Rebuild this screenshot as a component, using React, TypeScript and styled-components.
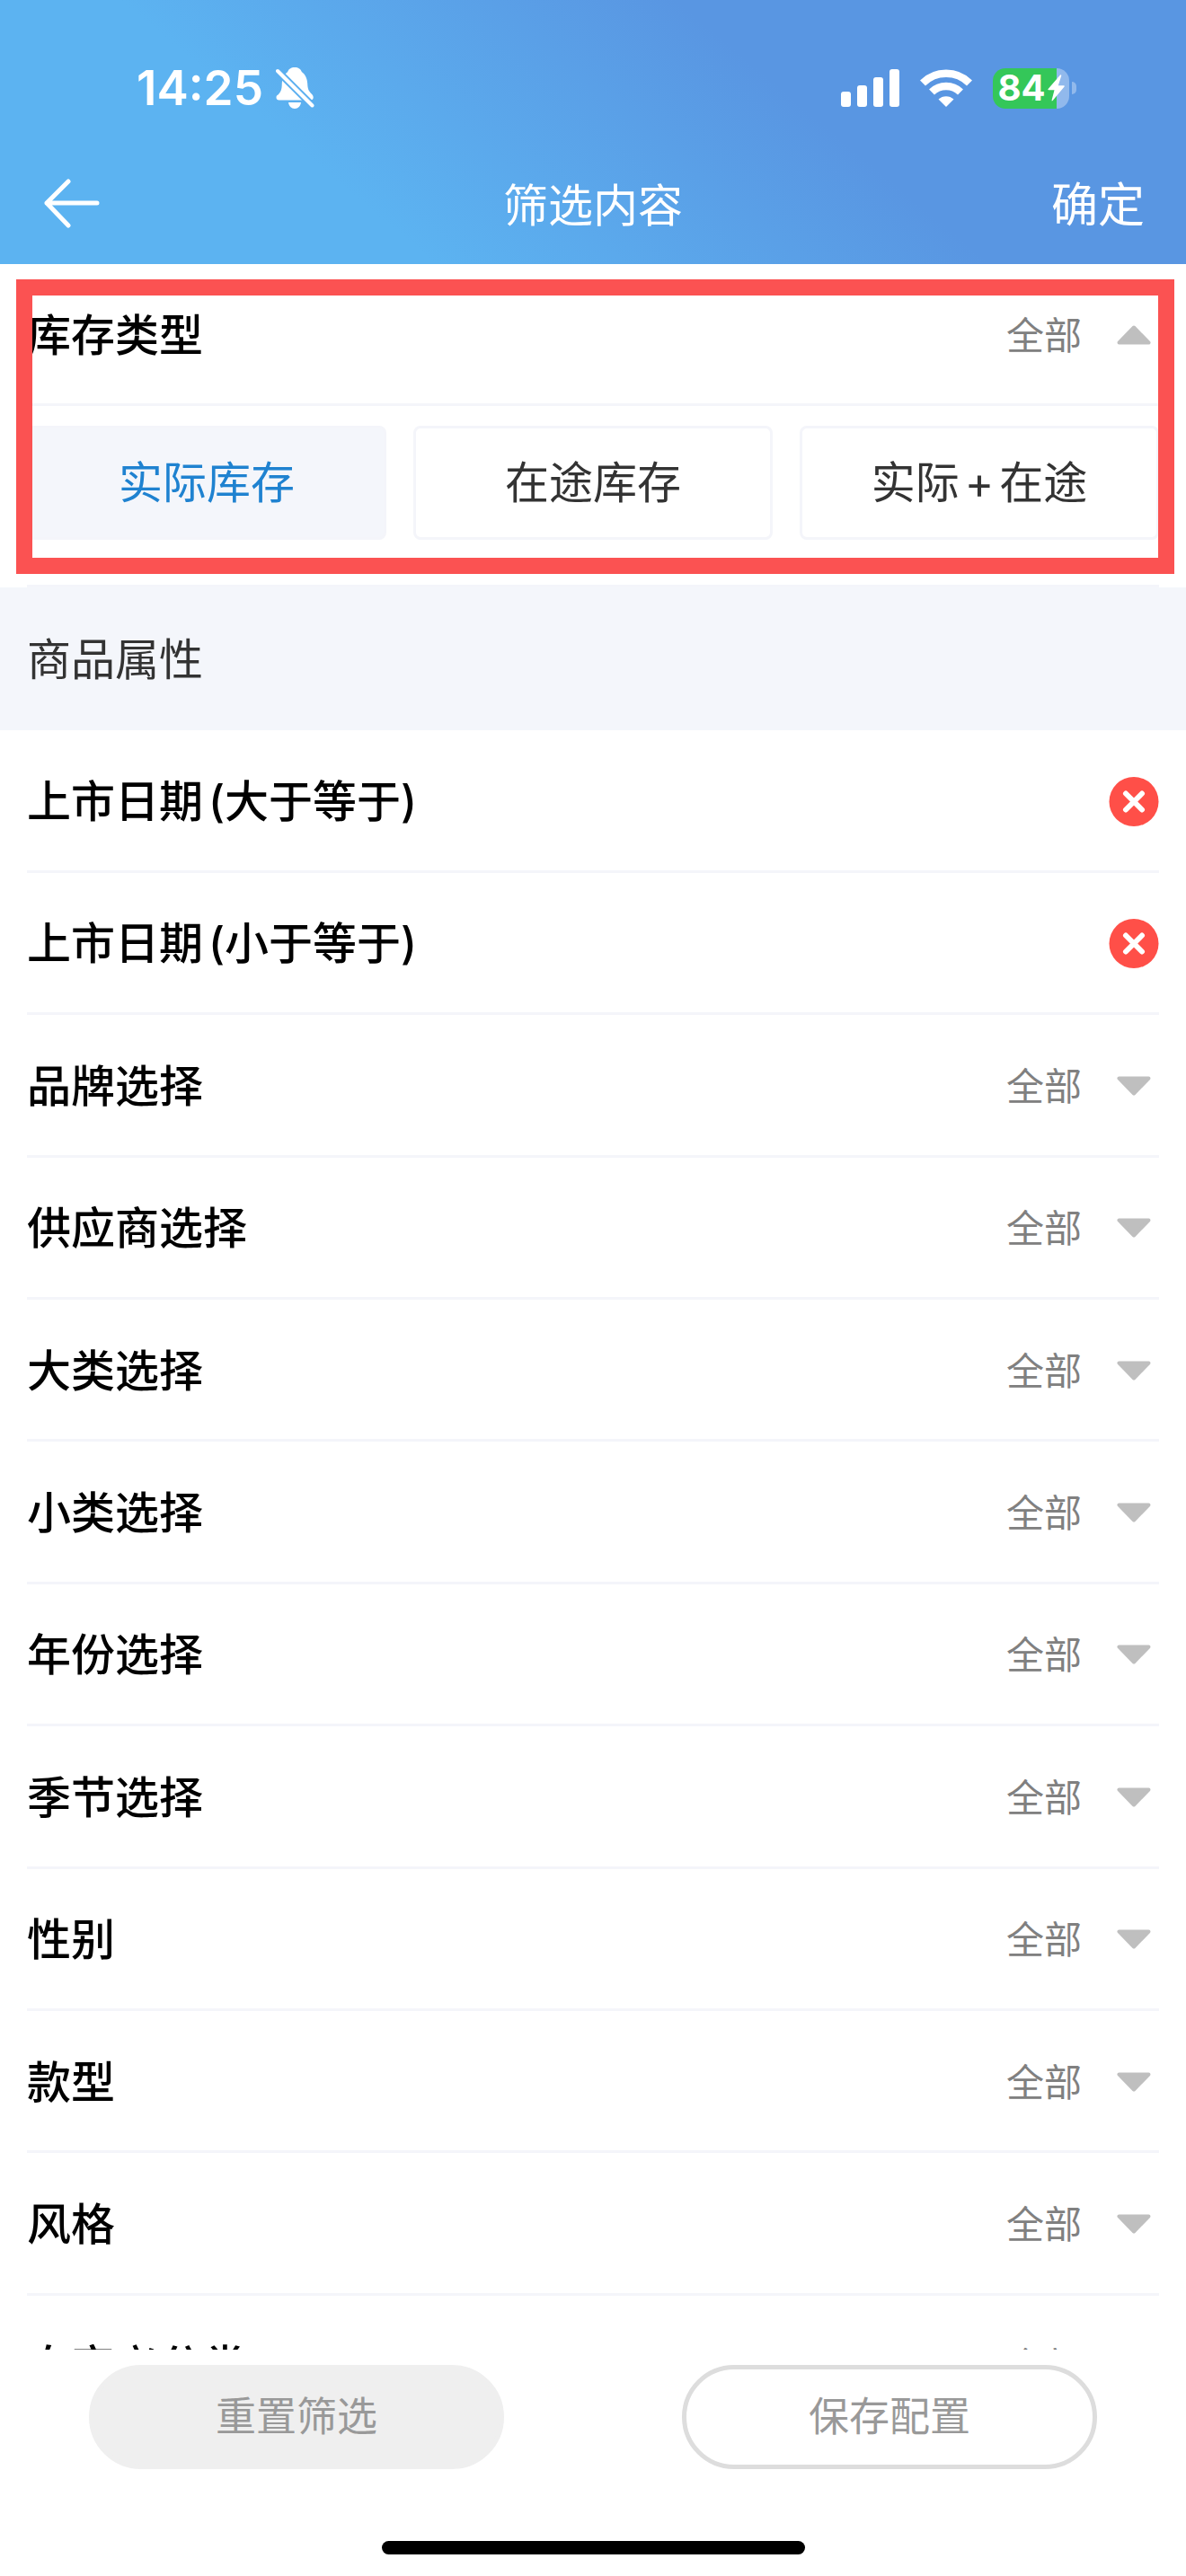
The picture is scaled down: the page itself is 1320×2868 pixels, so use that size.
import React, { useState } from "react";
import styled, { createGlobalStyle, css } from "styled-components";

const GlobalStyle = createGlobalStyle`
  * { box-sizing: border-box; }
  body {
    margin: 0;
    background: #ffffff;
    font-family: Inter, "Noto Sans CJK SC", sans-serif;
  }
  button {
    margin: 0;
    padding: 0;
    border: 0;
    background: none;
    font: inherit;
    color: inherit;
    cursor: pointer;
  }
  svg { display: block; }
`;

const Page = styled.div`
  display: flex;
  flex-direction: column;
  height: 100vh;
  background: #ffffff;
`;

const Header = styled.header`
  flex: none;
  color: #ffffff;
  background: linear-gradient(40deg, #5cb3f1 29%, #5996e2 66%);
`;

const StatusBar = styled.div`
  display: flex;
  align-items: center;
  justify-content: space-between;
  height: 164px;
  padding: 32px 122px 0 152px;
`;

const StatusGroup = styled.div<{ $gap: number }>`
  display: flex;
  align-items: center;
  gap: ${(p) => p.$gap}px;
`;

const Clock = styled.time`
  font-size: 53px;
  font-weight: 600;
  line-height: 64px;
`;

const Battery = styled.div`
  display: flex;
  align-items: center;
  gap: 3px;
`;

const BatteryBody = styled.div`
  display: flex;
  align-items: center;
  justify-content: center;
  gap: 2px;
  width: 85px;
  height: 45px;
  border-radius: 14px;
  background: linear-gradient(to right, #34c759 84%, #91b9ec 84%);
  font-size: 40px;
  font-weight: 700;
  line-height: 44px;
`;

const BatteryCap = styled.div`
  width: 5px;
  height: 14px;
  border-radius: 0 7px 7px 0;
  background: #91b9ec;
`;

const NavBar = styled.nav`
  display: grid;
  grid-template-columns: 1fr auto 1fr;
  align-items: center;
  height: 130px;
  padding: 0 46px;
`;

const BackButton = styled.button`
  justify-self: start;
`;

const Title = styled.h1`
  margin: 0;
  font-size: 50px;
  font-weight: 400;
  line-height: 64px;
`;

const ConfirmButton = styled.button`
  justify-self: end;
  font-size: 52px;
  line-height: 64px;
`;

const Main = styled.main`
  flex: 1;
  min-height: 0;
  overflow-y: auto;
  scrollbar-width: none;
`;

const StockSection = styled.section`
  position: relative;
`;

const Highlight = styled.div`
  position: absolute;
  inset: 17px 13px 15px 18px;
  border: 18px solid #fb5252;
  pointer-events: none;
`;

const rowStyle = css`
  display: flex;
  align-items: center;
  justify-content: space-between;
  width: 100%;
  height: 12vw;
  padding-top: 4px;
  border-bottom: 3px solid #f4f5fa;
`;

const Rows = styled.div`
  padding: 0 30px;
`;

const ToggleRow = styled.button`
  ${rowStyle}
`;

const DateRow = styled.div`
  ${rowStyle}
`;

const Label = styled.span`
  color: #000000;
  font-size: 49px;
  font-weight: 500;
  line-height: 64px;
`;

/* A Latin sign set among Chinese characters keeps a little air around it. */
const Sign = styled.span<{ $both?: boolean }>`
  margin: ${(p) => (p.$both ? "0 6px" : "0 0 0 6px")};
`;

const Current = styled.span`
  display: flex;
  align-items: center;
  gap: 30px;
  color: #808080;
  font-size: 42px;
  line-height: 64px;
`;

const Options = styled.div`
  display: grid;
  grid-template-columns: repeat(3, 1fr);
  gap: 30px;
  margin: 0 30px;
  padding: 22px 0 50px;
  border-bottom: 3px solid #f4f5fa;
`;

const Option = styled.button<{ $active: boolean }>`
  height: 127px;
  border: 3px solid #f4f5fa;
  border-radius: 8px;
  background: ${(p) => (p.$active ? "#f4f6fb" : "#ffffff")};
  color: ${(p) => (p.$active ? "#1f82d0" : "#333333")};
  font-size: 49px;
  line-height: 64px;
`;

const GroupTitle = styled.h2`
  margin: 0;
  padding: 49px 30px 46px;
  background: #f4f6fb;
  color: #333333;
  font-size: 49px;
  font-weight: 400;
  line-height: 64px;
`;

const Footer = styled.footer`
  flex: none;
  background: #ffffff;
`;

const Actions = styled.div`
  display: grid;
  grid-template-columns: 1fr 1fr;
  justify-items: center;
  padding: 17px 0 80px;
`;

const ActionButton = styled.button<{ $outlined?: boolean }>`
  width: 70%;
  height: 116px;
  border: 5px solid ${(p) => (p.$outlined ? "#dddddd" : "#efefef")};
  border-radius: 58px;
  background: ${(p) => (p.$outlined ? "#ffffff" : "#efefef")};
  color: #999999;
  font-size: 45px;
  line-height: 64px;
`;

const HomeIndicator = styled.div`
  width: 471px;
  height: 15px;
  margin: 0 auto 24px;
  border-radius: 8px;
  background: #000000;
`;

const MutedBell = () => (
  <svg width="43" height="46" viewBox="0 0 43 46" fill="none" aria-hidden="true">
    <path
      d="M21 0c-4 0-7 2-7.800 5C9 8 7 13 6.800 18c-.2 7-1 9-4.300 12.500C1 31 .5 32 .5 33.500c0 2 1.200 3 3.200 3h34.800c2 0 3.200-1 3.200-3 0-1.500-.5-2.500-2-4C36.400 26 35.400 24 35.200 18 35 13 33 8 28.800 5 28 2 25 0 21 0Z"
      fill="#ffffff"
    />
    <path d="M14 39h14c-.5 4-3.200 7-7 7s-6.500-3-7-7Z" fill="#ffffff" />
    <path d="M0 2 42 44" stroke="#5baff0" strokeWidth="8" />
    <path d="M2 4 40.500 42.500" stroke="#ffffff" strokeWidth="4" strokeLinecap="round" />
  </svg>
);

const Signal = () => (
  <svg width="65" height="42" viewBox="0 0 65 42" fill="#ffffff" aria-hidden="true">
    <rect x="0" y="25" width="11" height="17" rx="3" />
    <rect x="18" y="18" width="11" height="24" rx="3" />
    <rect x="36" y="9" width="11" height="33" rx="3" />
    <rect x="54" y="0" width="11" height="42" rx="3" />
  </svg>
);

const Wifi = () => (
  <svg width="58" height="42" viewBox="0 0 58 42" aria-hidden="true">
    <g fill="none" stroke="#ffffff">
      <path d="M3 15.500a37 37 0 0 1 52 0" strokeWidth="8.500" />
      <path d="M13 25.500a23 23 0 0 1 32 0" strokeWidth="8.500" />
    </g>
    <path d="M29 42 20.500 33.500a12.500 12.500 0 0 1 17 0Z" fill="#ffffff" />
  </svg>
);

const Bolt = () => (
  <svg width="19" height="30" viewBox="0 0 19 30" fill="#ffffff" aria-hidden="true">
    <path d="M14 0.500 0.600 16q-.8 1.200.6 1.200H7.500L4.600 28.500q-.1 1.500 1 .6L18.600 13.500q.8-1.200-.6-1.200H11.800L15.300 1.300q0-1.500-1.300-.8Z" />
  </svg>
);

const BackArrow = () => (
  <svg width="66" height="60" viewBox="0 0 66 60" fill="none" aria-hidden="true">
    <path
      d="M30 3 6 27l24 25M6 27h56"
      stroke="#ffffff"
      strokeWidth="5"
      strokeLinecap="round"
      strokeLinejoin="round"
    />
  </svg>
);

const Caret = ({ up }: { up?: boolean }) => (
  <svg width="56" height="56" viewBox="0 0 56 56" aria-hidden="true">
    <path
      d={up ? "M28 18.500 44.500 35.500H11.500Z" : "M11.500 18.500H44.500L28 35.500Z"}
      fill="#bfbfbf"
      stroke="#bfbfbf"
      strokeWidth="4"
      strokeLinejoin="round"
    />
  </svg>
);

const ClearIcon = () => (
  <svg width="56" height="56" viewBox="0 0 56 56" aria-hidden="true">
    <circle cx="28" cy="27.500" r="27.500" fill="#ff4f48" />
    <path
      d="M19 18.500 37 36.500M37 18.500 19 36.500"
      stroke="#ffffff"
      strokeWidth="6"
      strokeLinecap="round"
    />
  </svg>
);

const stockTypes = ["实际库存", "在途库存", "实际+在途"];
const dateFilters = ["上市日期(大于等于)", "上市日期(小于等于)"];
const filters = [
  "品牌选择",
  "供应商选择",
  "大类选择",
  "小类选择",
  "年份选择",
  "季节选择",
  "性别",
  "款型",
  "风格",
  "自定义分类",
];

const Spaced = ({ text }: { text: string }) => (
  <>
    {text.split(/([+(])/).map((part, i) =>
      part === "+" || part === "(" ? (
        <Sign key={i} $both={part === "+"}>
          {part}
        </Sign>
      ) : (
        part
      )
    )}
  </>
);

const FilterRow = ({ label, open }: { label: string; open?: boolean }) => (
  <ToggleRow type="button" aria-expanded={!!open}>
    <Label>{label}</Label>
    <Current>
      全部
      <Caret up={open} />
    </Current>
  </ToggleRow>
);

export default function App() {
  const [stockType, setStockType] = useState(stockTypes[0]);

  return (
    <Page lang="zh-CN">
      <GlobalStyle />
      <Header>
        <StatusBar>
          <StatusGroup $gap={14}>
            <Clock>14:25</Clock>
            <MutedBell />
          </StatusGroup>
          <StatusGroup $gap={23}>
            <Signal />
            <Wifi />
            <Battery>
              <BatteryBody>
                84
                <Bolt />
              </BatteryBody>
              <BatteryCap />
            </Battery>
          </StatusGroup>
        </StatusBar>
        <NavBar>
          <BackButton type="button" aria-label="返回">
            <BackArrow />
          </BackButton>
          <Title>筛选内容</Title>
          <ConfirmButton type="button">确定</ConfirmButton>
        </NavBar>
      </Header>

      <Main>
        <StockSection>
          <Rows>
            <FilterRow label="库存类型" open />
          </Rows>
          <Options>
            {stockTypes.map((name) => (
              <Option
                key={name}
                type="button"
                $active={name === stockType}
                aria-pressed={name === stockType}
                onClick={() => setStockType(name)}
              >
                <Spaced text={name} />
              </Option>
            ))}
          </Options>
          <Highlight />
        </StockSection>

        <GroupTitle>商品属性</GroupTitle>
        <Rows>
          {dateFilters.map((name) => (
            <DateRow key={name}>
              <Label>
                <Spaced text={name} />
              </Label>
              <button type="button" aria-label={`清除${name}`}>
                <ClearIcon />
              </button>
            </DateRow>
          ))}
          {filters.map((name) => (
            <FilterRow key={name} label={name} />
          ))}
        </Rows>
      </Main>

      <Footer>
        <Actions>
          <ActionButton type="button">重置筛选</ActionButton>
          <ActionButton type="button" $outlined>
            保存配置
          </ActionButton>
        </Actions>
        <HomeIndicator />
      </Footer>
    </Page>
  );
}
